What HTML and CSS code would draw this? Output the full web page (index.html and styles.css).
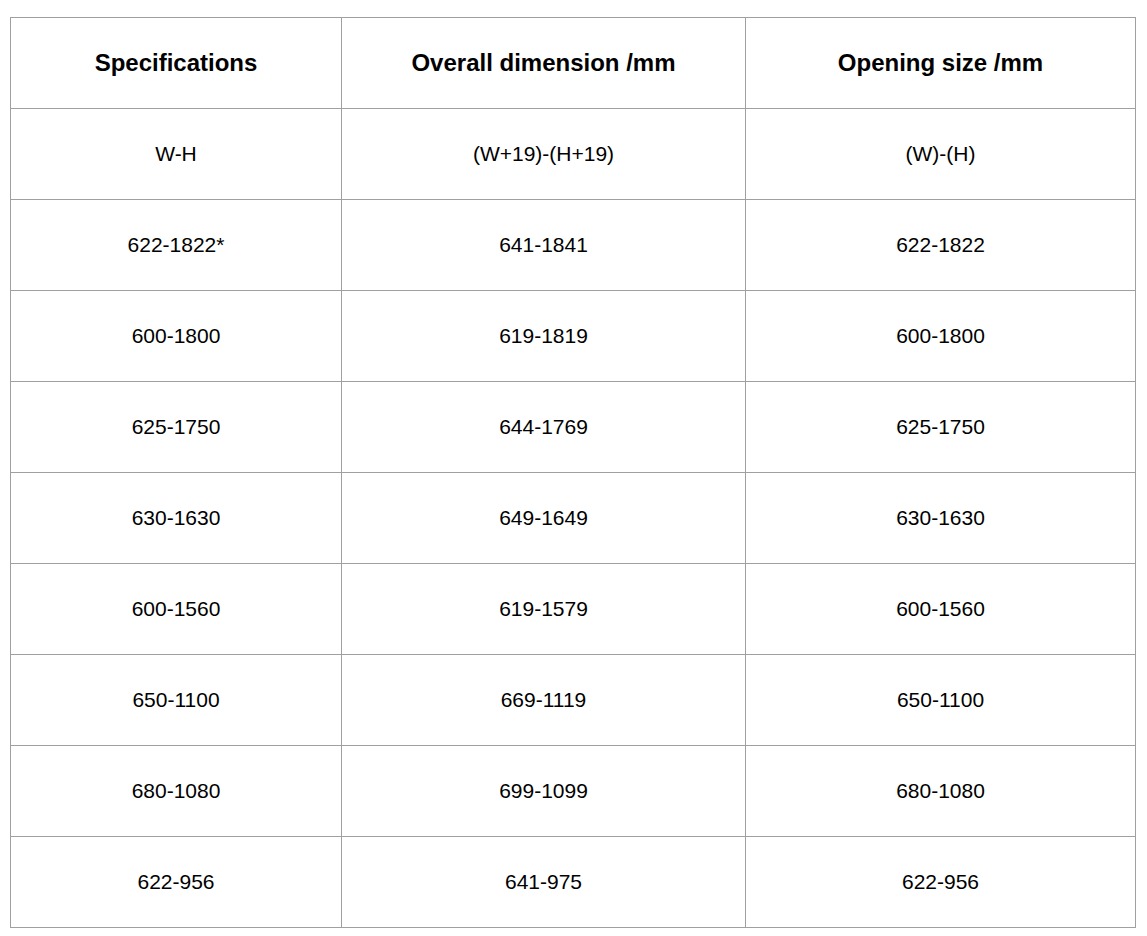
FILE: index.html
```html
<!DOCTYPE html>
<html>
<head>
<meta charset="utf-8">
<link rel="stylesheet" href="styles.css">
</head>
<body>
<table class="spec">
  <colgroup><col class="c1"><col class="c2"><col class="c3"></colgroup>
  <thead>
    <tr><th>Specifications</th><th>Overall dimension /mm</th><th>Opening size /mm</th></tr>
  </thead>
  <tbody>
    <tr><td>W-H</td><td>(W+19)-(H+19)</td><td>(W)-(H)</td></tr>
    <tr><td>622-1822*</td><td>641-1841</td><td>622-1822</td></tr>
    <tr><td>600-1800</td><td>619-1819</td><td>600-1800</td></tr>
    <tr><td>625-1750</td><td>644-1769</td><td>625-1750</td></tr>
    <tr><td>630-1630</td><td>649-1649</td><td>630-1630</td></tr>
    <tr><td>600-1560</td><td>619-1579</td><td>600-1560</td></tr>
    <tr><td>650-1100</td><td>669-1119</td><td>650-1100</td></tr>
    <tr><td>680-1080</td><td>699-1099</td><td>680-1080</td></tr>
    <tr><td>622-956</td><td>641-975</td><td>622-956</td></tr>
  </tbody>
</table>
</body>
</html>
```
FILE: styles.css
```css
html, body {
  margin: 0;
  padding: 0;
  background: #ffffff;
}
body {
  padding: 17px 12px 0 10px;
  font-family: "Liberation Sans", Arial, sans-serif;
  color: #000;
}
.spec {
  border-collapse: collapse;
  width: 1125px;
  table-layout: fixed;
}
.c1 { width: 331px; }
.c2 { width: 404px; }
.c3 { width: 390px; }
.spec th, .spec td {
  border: 1px solid #a0a0a0;
  height: 91px;
  padding: 0;
  text-align: center;
  vertical-align: middle;
  box-sizing: border-box;
}
.spec th {
  font-size: 24px;
  font-weight: bold;
}
.spec td {
  font-size: 21px;
}
```
